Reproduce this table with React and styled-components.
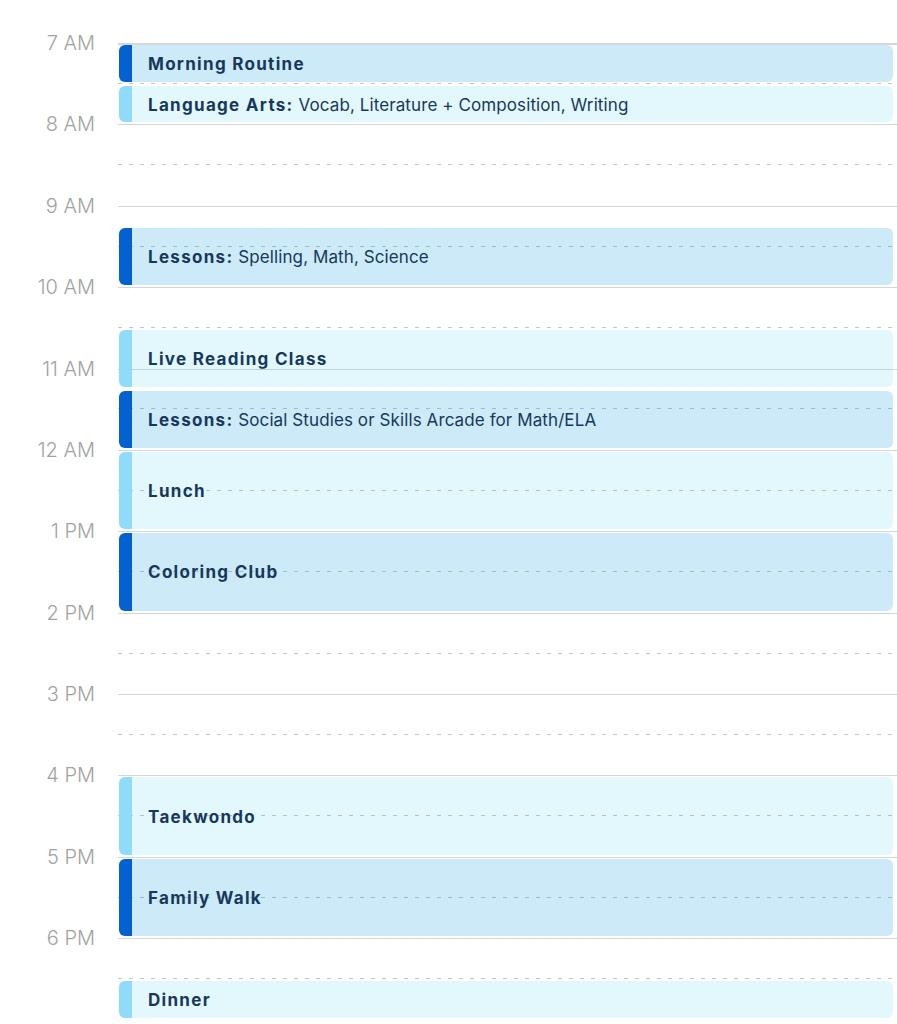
import React from 'react';
import styled, { createGlobalStyle } from 'styled-components';

const HOUR = 81.4;
const QUARTER = HOUR / 4;

const GlobalStyle = createGlobalStyle`
  html, body {
    margin: 0;
    padding: 0;
    background: #ffffff;
    font-family: Inter, "Noto Sans", "Liberation Sans", sans-serif;
  }
`;

const Page = styled.div`
  padding-top: 43px;
  width: 897px;
  overflow: hidden;
`;

const Timeline = styled.div`
  display: grid;
  grid-template-columns: 118px 1fr;
  grid-template-rows: repeat(48, ${QUARTER}px);
`;

const HourLabel = styled.div`
  grid-column: 1;
  grid-row: ${(p) => p.$row} / span 1;
  align-self: start;
  margin-top: -12px;
  padding-right: 23px;
  text-align: right;
  font-size: 20px;
  line-height: 24px;
  color: #a2a2a2;
  font-weight: 300;
  white-space: nowrap;
`;

const HourSlot = styled.div`
  grid-column: 2;
  grid-row: ${(p) => p.$row} / span 4;
  border-top: ${(p) => (p.$first ? '2px' : '1.5px')} solid #d6d6d6;
  display: flex;
  flex-direction: column;
  justify-content: center;
`;

const HalfRule = styled.div`
  height: 1px;
  margin-top: -1.5px;
  background: repeating-linear-gradient(90deg, #c2c6ca 0 4px, transparent 4px 11px);
`;

const Event = styled.div`
  grid-column: 2;
  grid-row: ${(p) => p.$start} / ${(p) => p.$end};
  margin: 2px 4px 2px 1px;
  display: flex;
  align-items: stretch;
  border-radius: 6px;
  overflow: hidden;
  background: ${(p) => (p.$dark ? 'rgba(0, 150, 220, 0.2)' : 'rgba(0, 190, 230, 0.11)')};
  z-index: 1;
`;

const Bar = styled.div`
  width: 13px;
  flex: none;
  background: ${(p) => (p.$dark ? '#0561d0' : '#90dbfb')};
`;

const Body = styled.div`
  flex: 1;
  display: flex;
  align-items: center;
  padding: 1px 0 0 16px;
  font-size: 17px;
  color: #17385c;
  white-space: nowrap;
`;

const Title = styled.span`
  font-weight: 700;
  letter-spacing: 1.3px;
`;

const Detail = styled.span`
  font-weight: 400;
  letter-spacing: 0.1px;
`;

const hours = ['7 AM', '8 AM', '9 AM', '10 AM', '11 AM', '12 AM', '1 PM', '2 PM', '3 PM', '4 PM', '5 PM', '6 PM'];

// minutes from 7:00
const events = [
  { title: 'Morning Routine', start: 0, end: 30, dark: true },
  { title: 'Language Arts:', detail: 'Vocab, Literature + Composition, Writing', start: 30, end: 60 },
  { title: 'Lessons:', detail: 'Spelling, Math, Science', start: 135, end: 180, dark: true },
  { title: 'Live Reading Class', start: 210, end: 255 },
  { title: 'Lessons:', detail: 'Social Studies or Skills Arcade for Math/ELA', start: 255, end: 300, dark: true },
  { title: 'Lunch', start: 300, end: 360 },
  { title: 'Coloring Club', start: 360, end: 420, dark: true },
  { title: 'Taekwondo', start: 540, end: 600 },
  { title: 'Family Walk', start: 600, end: 660, dark: true },
  { title: 'Dinner', start: 690, end: 720 },
];

export default function App() {
  return (
    <Page>
      <GlobalStyle />
      <Timeline>
        {hours.map((h, i) => (
          <React.Fragment key={h}>
            <HourLabel $row={i * 4 + 1}>{h}</HourLabel>
            <HourSlot $row={i * 4 + 1} $first={i === 0}>
              <HalfRule />
            </HourSlot>
          </React.Fragment>
        ))}
        {events.map((ev, i) => (
          <Event key={i} $start={ev.start / 15 + 1} $end={ev.end / 15 + 1} $dark={ev.dark}>
            <Bar $dark={ev.dark} />
            <Body>
              <Title>{ev.title}</Title>
              {ev.detail && <Detail>&nbsp;{ev.detail}</Detail>}
            </Body>
          </Event>
        ))}
      </Timeline>
    </Page>
  );
}
